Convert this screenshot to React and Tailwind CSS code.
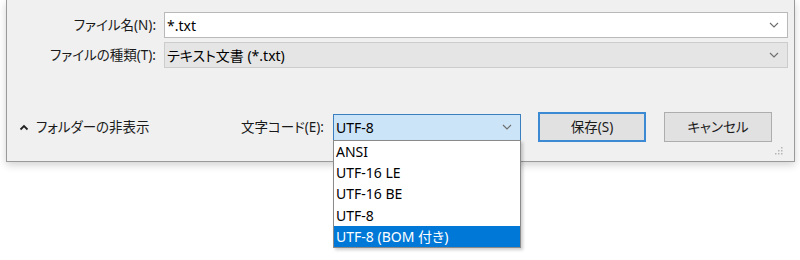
const font = "font-['Noto_Sans','Noto_Sans_CJK_JP',sans-serif] [font-feature-settings:'palt']";

const encodings = ['ANSI', 'UTF-16 LE', 'UTF-16 BE', 'UTF-8', 'UTF-8 (BOM 付き)'];

function Chevron({ className = '' }) {
  return (
    <svg width="10" height="6" viewBox="0 0 10 6" className={className}>
      <path d="M1 1 L5 5 L9 1" fill="none" stroke="#6d6d6d" strokeWidth="1.1" />
    </svg>
  );
}

function FieldRow({ label, value, grey }) {
  return (
    <div className="flex items-center h-[26px]">
      <div className="w-[150px] text-right text-[13.5px] text-[#1a1a1a] pr-[1px]">{label}</div>
      <div
        className={`ml-[7px] flex-1 h-[26px] flex items-center justify-between pl-[2px] pr-[8px] border ${
          grey ? 'bg-[#e5e5e5] border-[#cccccc]' : 'bg-white border-[#b9b9b9]'
        }`}
      >
        <span className="text-[14px] text-black">{value}</span>
        <Chevron />
      </div>
    </div>
  );
}

export default function App() {
  return (
    <div className={`w-[800px] h-[260px] bg-white overflow-hidden ${font}`}>
      <div className="ml-[6px] w-[789px] h-[162px] bg-[#f0f0f0] border-x border-b border-[#9a9a9a] shadow-[0_3px_8px_rgba(0,0,0,0.18)] flex flex-col">
        <div className="pt-[12px] pr-[6px] flex flex-col gap-[4px]">
          <FieldRow label="ファイル名(N):" value="*.txt" />
          <FieldRow label="ファイルの種類(T):" value="テキスト文書 (*.txt)" grey />
        </div>

        <div className="mt-[44px] h-[30px] flex items-center pr-[22px] relative">
          <div className="flex items-center ml-[12px] text-[13.5px] text-[#1a1a1a]">
            <svg width="10" height="7" viewBox="0 0 10 7" className="mr-[7px]">
              <path d="M1.5 5.5 L5 2 L8.5 5.5" fill="none" stroke="#222" strokeWidth="1.8" />
            </svg>
            <span>フォルダーの非表示</span>
          </div>
          <div className="flex-1" />
          <span className="text-[13.5px] text-[#1a1a1a] mr-[9px]">文字コード(E):</span>
          <div className="relative w-[188px] h-[27px]">
            <div className="h-full bg-[#cce4f7] border border-[#3c7fbf] flex items-center justify-between pl-[2px] pr-[8px]">
              <span className="text-[14px] text-black">UTF-8</span>
              <Chevron />
            </div>
            <div className="absolute left-0 top-[26px] w-full bg-white border border-[#8a8a8a] shadow-[2px_2px_3px_rgba(0,0,0,0.2)] z-10">
              {encodings.map((e, i) => (
                <div
                  key={e}
                  className={`h-[21.4px] flex items-center pl-[2px] text-[14px] ${
                    i === encodings.length - 1 ? 'bg-[#0078d7] text-white' : 'text-black'
                  }`}
                >
                  {e}
                </div>
              ))}
            </div>
          </div>
          <button className="ml-[17px] w-[108px] h-[30px] bg-[#e1e1e1] border-2 border-[#3c8ad4] text-[13.5px] text-[#1a1a1a]">
            保存(S)
          </button>
          <button className="ml-[18px] w-[108px] h-[30px] bg-[#e1e1e1] border border-[#adadad] text-[13.5px] text-[#1a1a1a]">
            キャンセル
          </button>
          <svg width="10" height="10" viewBox="0 0 10 10" className="absolute right-[10px] bottom-[-14px]">
            <rect x="7" y="1" width="1.5" height="1.5" fill="#b5b5b5" />
            <rect x="4" y="4" width="1.5" height="1.5" fill="#b5b5b5" />
            <rect x="7" y="4" width="1.5" height="1.5" fill="#b5b5b5" />
            <rect x="1" y="7" width="1.5" height="1.5" fill="#b5b5b5" />
            <rect x="4" y="7" width="1.5" height="1.5" fill="#b5b5b5" />
            <rect x="7" y="7" width="1.5" height="1.5" fill="#b5b5b5" />
          </svg>
        </div>
      </div>
    </div>
  );
}
